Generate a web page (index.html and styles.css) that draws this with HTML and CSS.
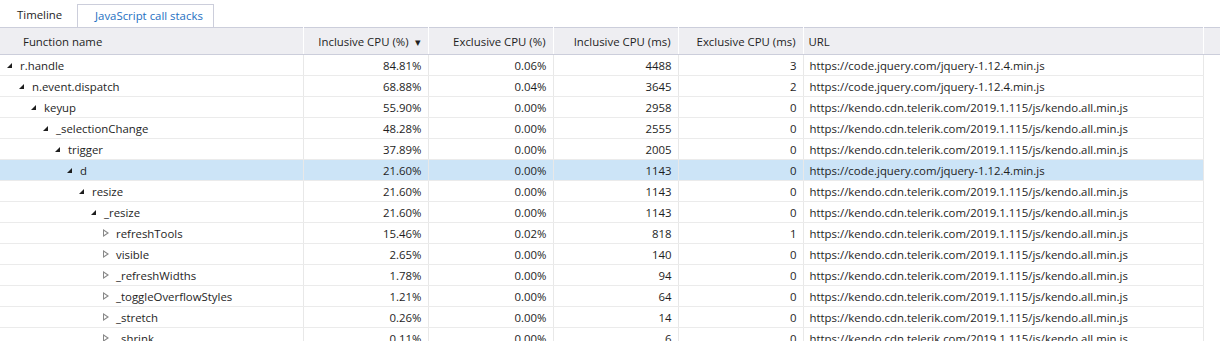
FILE: index.html
```html
<!DOCTYPE html>
<html>
	<head>
		<meta charset="UTF-8">
		<title>JavaScript call stacks</title>
		<link rel="stylesheet" href="styles.css">
	</head>
	<body>
		<div class="tabs">
			<div class="tab">Timeline</div>
			<div class="tab tab-active">JavaScript call stacks</div>
		</div>
		<div class="grid">
			<table>
				<thead>
					<tr>
						<th class="col-name">Function name</th>
						<th class="col-num">Inclusive CPU (%) <span class="sort">&#9662;</span></th>
						<th class="col-num">Exclusive CPU (%)</th>
						<th class="col-num">Inclusive CPU (ms)</th>
						<th class="col-num">Exclusive CPU (ms)</th>
						<th class="col-url">URL</th>
						<th class="col-fill"></th>
					</tr>
				</thead>
				<tbody id="rows"></tbody>
			</table>
		</div>

		<script type="text/javascript">
			var jq = "https://code.jquery.com/jquery-1.12.4.min.js";
			var kendo = "https://kendo.cdn.telerik.com/2019.1.115/js/kendo.all.min.js";

			// name, level, open, incl %, excl %, incl ms, excl ms, url
			var data = [
				["r.handle", 0, 1, "84.81%", "0.06%", 4488, 3, jq],
				["n.event.dispatch", 1, 1, "68.88%", "0.04%", 3645, 2, jq],
				["keyup", 2, 1, "55.90%", "0.00%", 2958, 0, kendo],
				["_selectionChange", 3, 1, "48.28%", "0.00%", 2555, 0, kendo],
				["trigger", 4, 1, "37.89%", "0.00%", 2005, 0, kendo],
				["d", 5, 1, "21.60%", "0.00%", 1143, 0, jq],
				["resize", 6, 1, "21.60%", "0.00%", 1143, 0, kendo],
				["_resize", 7, 1, "21.60%", "0.00%", 1143, 0, kendo],
				["refreshTools", 8, 0, "15.46%", "0.02%", 818, 1, kendo],
				["visible", 8, 0, "2.65%", "0.00%", 140, 0, kendo],
				["_refreshWidths", 8, 0, "1.78%", "0.00%", 94, 0, kendo],
				["_toggleOverflowStyles", 8, 0, "1.21%", "0.00%", 64, 0, kendo],
				["_stretch", 8, 0, "0.26%", "0.00%", 14, 0, kendo],
				["_shrink", 8, 0, "0.11%", "0.00%", 6, 0, kendo]
			];

			var rows = document.getElementById("rows");
			var html = "";
			for (var i = 0; i < data.length; i++) {
				var d = data[i];
				var cls = d[0] == "d" ? ' class="selected"' : "";
				var arrow = d[2] ? '<span class="exp open"></span>' : '<span class="exp closed"></span>';
				html += "<tr" + cls + ">" +
					'<td class="col-name"><div class="name" style="padding-left:' + (d[1] * 12) + 'px">' + arrow + d[0] + "</div></td>" +
					'<td class="col-num">' + d[3] + "</td>" +
					'<td class="col-num">' + d[4] + "</td>" +
					'<td class="col-num">' + d[5] + "</td>" +
					'<td class="col-num">' + d[6] + "</td>" +
					'<td class="col-url">' + d[7] + "</td>" +
					'<td class="col-fill"></td>' +
					"</tr>";
			}
			rows.innerHTML = html;
		</script>
	</body>
</html>
```

FILE: styles.css
```css
* {
	margin: 0;
	padding: 0;
	box-sizing: border-box;
}

body {
	font-family: "Open Sans", "Noto Sans", sans-serif;
	font-size: 11.4px;
	color: #1e1e1e;
	background: #fff;
}

.tabs {
	display: flex;
	padding-top: 4px;
	height: 27px;
}

.tab {
	height: 23px;
	line-height: 22px;
	width: 77px;
	padding-left: 17px;
	color: #1e1e1e;
}

.tab-active {
	width: 137px;
	color: #1e6fc2;
	border: 1px solid #cccedb;
	border-bottom: none;
	padding-left: 17px;
}

.grid {
	height: 314px;
	overflow: hidden;
}

table {
	border-collapse: collapse;
	table-layout: fixed;
	width: 1220px;
}

th {
	height: 27px;
	background: #eeeef2;
	border-top: 1px solid #cccedb;
	border-bottom: 1px solid #cccedb;
	border-right: 1px solid #fff;
	font-weight: normal;
	white-space: nowrap;
	overflow: hidden;
}

td {
	height: 21px;
	border-bottom: 1px solid #ebebeb;
	border-right: 1px solid #e8e8e8;
	white-space: nowrap;
	overflow: hidden;
}

th.col-name {
	width: 303px;
	text-align: left;
	padding-left: 23px;
}

th.col-num {
	width: 125px;
	text-align: right;
	padding-right: 7px;
}

th.col-url {
	width: 400px;
	text-align: left;
	padding-left: 5px;
}

th.col-fill {
	border-right: none;
}

td.col-num {
	text-align: right;
	padding-right: 6px;
}

td.col-url {
	padding-left: 6px;
}

td.col-fill {
	border-right: none;
	border-bottom: none;
}

td.col-name {
	padding-left: 5px;
}

.name {
	display: flex;
	align-items: center;
}

.sort {
	font-size: 11px;
	margin-left: 3px;
}

.exp {
	display: inline-block;
}

.open {
	width: 0;
	height: 0;
	border-left: 5px solid transparent;
	border-bottom: 5px solid #1e1e1e;
	margin: 0 8px 0 2px;
}

.closed {
	width: 0;
	height: 0;
	border-top: 4px solid transparent;
	border-bottom: 4px solid transparent;
	border-left: 6px solid #888;
	position: relative;
	margin: 0 7px 0 2px;
}

.closed::after {
	content: "";
	position: absolute;
	left: -5px;
	top: -2px;
	border-top: 2px solid transparent;
	border-bottom: 2px solid transparent;
	border-left: 3px solid #fff;
}

tr.selected td {
	background: #cce4f7;
}

tr.selected td.col-fill {
	background: #fff;
}
```
